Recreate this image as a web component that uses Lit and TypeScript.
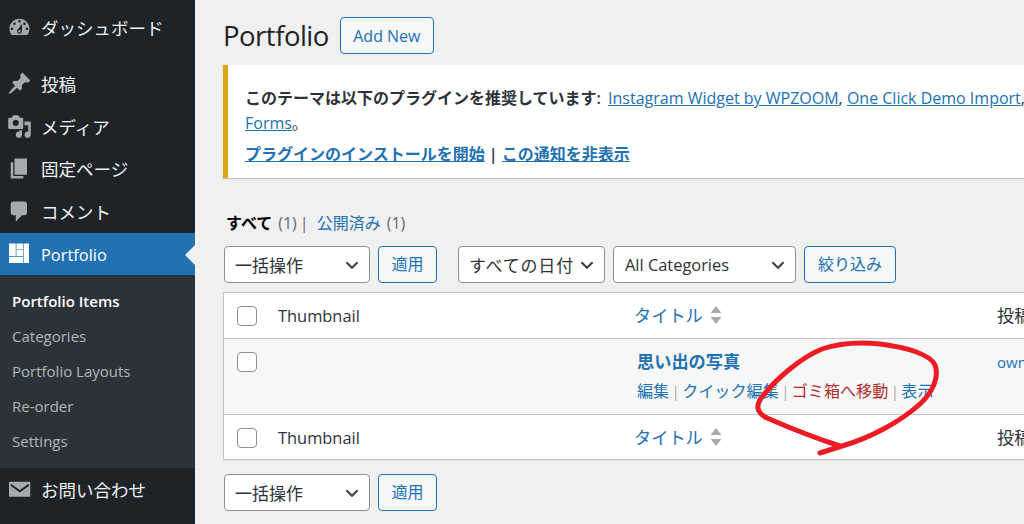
import { LitElement, html, css, svg, unsafeCSS } from "lit";
import { customElement } from "lit/decorators.js";

const FONT = unsafeCSS(`"Open Sans", "Noto Sans CJK JP", sans-serif`);

const ICONS: Record<string, string> = {
  dash: "M3.76 16h12.48c1.1-1.37 1.76-3.11 1.76-5 0-4.42-3.58-8-8-8s-8 3.58-8 8c0 1.89.66 3.63 1.76 5zM10 4c.55 0 1 .45 1 1s-.45 1-1 1-1-.45-1-1 .45-1 1-1zM6 6c.55 0 1 .45 1 1s-.45 1-1 1-1-.45-1-1 .45-1 1-1zm8 0c.55 0 1 .45 1 1s-.45 1-1 1-1-.45-1-1 .45-1 1-1zm-5.37 5.55L12 7v6c0 1.1-.9 2-2 2s-2-.9-2-2c0-.57.24-1.08.63-1.45zM4 10c.55 0 1 .45 1 1s-.45 1-1 1-1-.45-1-1 .45-1 1-1zm12 0c.55 0 1 .45 1 1s-.45 1-1 1-1-.45-1-1 .45-1 1-1zm-5 3c0-.55-.45-1-1-1s-1 .45-1 1 .45 1 1 1 1-.45 1-1z",
  pin: "M10.44 3.02l1.82-1.82 6.36 6.35-1.83 1.82c-1.05-.68-2.48-.57-3.41.36l-.75.75c-.92.93-1.04 2.35-.35 3.41l-1.83 1.82-2.41-2.41-2.8 2.79c-.42.42-3.38 2.71-3.8 2.29s1.86-3.39 2.28-3.81l2.79-2.79L4.1 9.36l1.83-1.82c1.05.69 2.48.57 3.4-.36l.75-.75c.93-.92 1.05-2.35.36-3.41z",
  media: "M13 11V4c0-.55-.45-1-1-1h-1.67L9 1H5L3.67 3H2c-.55 0-1 .45-1 1v7c0 .55.45 1 1 1h10c.55 0 1-.45 1-1zM7 4.5c1.38 0 2.5 1.12 2.5 2.5S8.38 9.5 7 9.5 4.5 8.38 4.5 7 5.62 4.5 7 4.5zM14 6h5v10.5c0 1.38-1.12 2.5-2.5 2.5S14 17.88 14 16.5s1.12-2.5 2.5-2.5c.17 0 .34.02.5.05V9h-3V6zm-4 8.05V13h2v3.5c0 1.38-1.12 2.5-2.5 2.5S7 17.88 7 16.5 8.12 14 9.5 14c.17 0 .34.02.5.05z",
  page: "M6 15V2h10v13H6zm-1 1h8v2H3V5h2v11z",
  comment: "M5 2h9c1.1 0 2 .9 2 2v7c0 1.1-.9 2-2 2h-2l-5 5v-5H5c-1.1 0-2-.9-2-2V4c0-1.1.9-2 2-2z",
  portfolio: "M1.6 2H7v10H1.6zM7.5 2h5.3v4.5H7.5zM7.5 7h5.3v5H7.5zM13.3 2h4.3v15.6h-4.3zM1.6 12.5h11.2v5.1H1.6z",
  mail: "M1.6 3.8h17v12h-17zM3.4 5.6l6.9 4.8 6.7-4.8.8 1.4-7.5 5.4L2.8 7z",
};

@customElement("app-root")
export class AppRoot extends LitElement {
  static styles = css`
    :host { display: block; width: 1024px; height: 524px; overflow: hidden; position: relative; background: #f0f0f1; font-family: ${FONT}; }
    .page { display: flex; width: 1024px; height: 524px; }
    .side { width: 195px; flex: none; background: #1d2327; color: #f0f0f1; font-size: 17.5px; }
    .item { display: flex; align-items: center; height: 42.5px; padding-left: 7px; gap: 9px; white-space: nowrap; }
    .item svg { width: 25px; height: 25px; fill: #a7aaad; flex: none; }
    .item.first { margin: 6px 0 14px; }
    .item.cur { background: #2271b1; color: #fff; position: relative; }
    .item.cur svg { fill: #fff; }
    .item.cur::after { content: ""; position: absolute; right: 0; top: 12px; border: 10px solid transparent; border-right-color: #f0f0f1; border-left: 0; }
    .latin { font-size: 16.4px; padding-top: 2px; }
    .sub { background: #2c3338; padding: 9px 0; font-size: 15px; color: #b3b6b9; }
    .sub div { height: 35px; line-height: 35px; padding-left: 12px; }
    .sub .on { color: #fff; font-weight: 600; }
    .main { flex: 1; min-width: 0; padding: 17px 0 0 28px; color: #3c434a; font-size: 16.4px; overflow: hidden; }
    .head { display: flex; align-items: center; gap: 11px; }
    h1 { margin: 0; font-size: 27.5px; letter-spacing: -0.5px; font-weight: 400; color: #1d2327; line-height: 37px; }
    .btn { box-sizing: border-box; height: 37px; display: inline-flex; align-items: center; justify-content: center; border: 1px solid #2271b1; border-radius: 4px; background: #f6f7f7; color: #2271b1; font-size: 16px; flex: none; }
    .btn.cjk { padding-bottom: 3px; }
    .add { width: 94px; }
    .notice { margin-top: 11px; height: 113px; box-sizing: border-box; width: 1000px; background: #fff; border-left: 5px solid #dba617; box-shadow: 0 1px 1px rgba(0,0,0,.2); padding: 21px 0 0 17px; font-size: 16px; line-height: 25px; white-space: nowrap; color: #2c3338; }
    .notice a { color: #2271b1; text-decoration: underline; }
    .notice a.lead { margin-left: 3px; }
    .notice p { margin: 0; }
    .notice .strong { font-weight: 600; }
    .notice .acts { margin-top: 6px; }
    .tabs { margin: 33px 0 0 3px; height: 24px; line-height: 24px; font-size: 16px; color: #646970; display: flex; gap: 6px; }
    .tabs b { color: #000; font-weight: 700; }
    .tabs a { color: #2271b1; }
    .tabs .sep { margin: 0 2px 0 -3px; }
    .tools { display: flex; margin: 11px 0 0 1px; }
    .tools.low { margin-top: 14px; }
    .sel { box-sizing: border-box; height: 37px; display: flex; align-items: center; justify-content: space-between; background: #fff; border: 1px solid #8c8f94; border-radius: 4px; padding: 0 10px; font-size: 17px; color: #2c3338; flex: none; white-space: nowrap; }
    .sel.en { font-size: 16.4px; padding-left: 11px; }
    .sel.wide span { letter-spacing: 0.8px; }
    .sel svg { width: 14px; height: 10px; fill: none; stroke: #3c434a; stroke-width: 2.2; }
    .table { box-sizing: border-box; margin-top: 9px; width: 1000px; background: #fff; border: 1px solid #c3c4c7; box-shadow: 0 1px 1px rgba(0,0,0,.04); }
    .row { display: grid; grid-template-columns: 13px 20px 21px 357px 362px 1fr; }
    .hrow { height: 45px; align-items: center; font-size: 16.4px; color: #2c3338; }
    .hrow .cb, .rrow .cb { grid-column: 2; }
    .hrow.top { border-bottom: 1px solid #c3c4c7; }
    .hrow.bot { border-top: 1px solid #c3c4c7; height: 43px; padding-top: 1px; }
    .cb { box-sizing: border-box; width: 20px; height: 20px; background: #fff; border: 1px solid #8c8f94; border-radius: 4px; }
    .title-h { color: #2271b1; display: flex; align-items: center; gap: 7px; font-size: 17.2px; padding-bottom: 2px; margin-left: -1px; }
    .title-h svg { width: 12px; height: 20px; fill: #a7aaad; }
    .author { font-size: 17.2px; padding-bottom: 2px; white-space: nowrap; }
    .rrow { height: 75px; background: #f6f7f7; color: #2271b1; }
    .rrow .cb { margin-top: 13px; }
    .rrow .col { grid-column: 5; padding: 11px 0 0 2px; white-space: nowrap; }
    .rrow .own { grid-column: 6; padding-top: 11px; font-size: 15px; line-height: 24px; }
    .rtitle { font-weight: 700; font-size: 17.2px; line-height: 24px; }
    .ra { margin-top: 4px; font-size: 16.1px; line-height: 26px; display: flex; }
    .ra i { font-style: normal; color: #a7aaad; width: 13px; text-align: center; font-size: 15px; }
    .ra .del { color: #b32d2e; }
    .ink { position: absolute; left: 0; top: 0; width: 1024px; height: 524px; pointer-events: none; fill: none; stroke: #ed1c24; stroke-width: 5; stroke-linecap: round; stroke-linejoin: round; }
  `;

  private icon(name: string) {
    return html`<svg viewBox="0 0 20 20" aria-hidden="true"><path fill-rule="evenodd" d=${ICONS[name]}></path></svg>`;
  }

  private select(label: string, w: number, ml = 0, cls = "") {
    return html`<div class="sel ${cls}" style="width:${w}px;margin-left:${ml}px"><span>${label}</span><svg viewBox="0 0 15 10"><path d="M1.5 2l6 6 6-6"></path></svg></div>`;
  }

  private btn(label: string, w: number, ml = 8) {
    return html`<div class="btn cjk" style="width:${w}px;margin-left:${ml}px">${label}</div>`;
  }

  private headRow(cls: string) {
    return html`<div class="row hrow ${cls}">
      <div class="cb"></div>
      <div></div>
      <div>Thumbnail</div>
      <div class="title-h">タイトル<svg viewBox="0 0 12 20"><path d="M6 1l5.5 7H.5zM6 19L.5 12h11z"></path></svg></div>
      <div class="author">投稿者</div>
    </div>`;
  }

  render() {
    return html`
      <div class="page">
        <nav class="side">
          <div class="item first">${this.icon("dash")}ダッシュボード</div>
          <div class="item">${this.icon("pin")}投稿</div>
          <div class="item">${this.icon("media")}メディア</div>
          <div class="item">${this.icon("page")}固定ページ</div>
          <div class="item">${this.icon("comment")}コメント</div>
          <div class="item cur">${this.icon("portfolio")}<span class="latin">Portfolio</span></div>
          <div class="sub">
            <div class="on">Portfolio Items</div>
            <div>Categories</div>
            <div>Portfolio Layouts</div>
            <div>Re-order</div>
            <div>Settings</div>
          </div>
          <div class="item">${this.icon("mail")}お問い合わせ</div>
        </nav>
        <main class="main">
          <div class="head"><h1>Portfolio</h1><div class="btn add">Add New</div></div>
          <div class="notice">
            <p><span class="strong">このテーマは以下のプラグインを推奨しています:</span> <a class="lead">Instagram Widget by WPZOOM</a>, <a>One Click Demo Import</a>,</p>
            <p><a>Forms</a>。</p>
            <p class="acts strong"><a>プラグインのインストールを開始</a> | <a>この通知を非表示</a></p>
          </div>
          <div class="tabs"><b>すべて</b><span>(1)</span><span class="sep">|</span><a>公開済み</a><span>(1)</span></div>
          <div class="tools">
            ${this.select("一括操作", 146)}${this.btn("適用", 59)}
            ${this.select("すべての日付", 147, 21, "wide")}${this.select("All Categories", 183, 8, "en")}${this.btn("絞り込み", 92)}
          </div>
          <div class="table">
            ${this.headRow("top")}
            <div class="row rrow">
              <div class="cb"></div>
              <div class="col">
                <div class="rtitle">思い出の写真</div>
                <div class="ra"><span>編集</span><i>|</i><span>クイック編集</span><i>|</i><span class="del">ゴミ箱へ移動</span><i>|</i><span>表示</span></div>
              </div>
              <div class="own">owner</div>
            </div>
            ${this.headRow("bot")}
          </div>
          <div class="tools low">${this.select("一括操作", 146)}${this.btn("適用", 59)}</div>
        </main>
      </div>
      <svg class="ink" viewBox="0 0 1024 524" aria-hidden="true">
        ${svg`<path d="M820 453 L842 446 C870 438 900 422 920 404 C934 391 939 376 935 365 C930 354 905 347 880 344 C860 342 840 343 822 349 C800 358 775 380 762 397 C755 406 757 413 767 418 C790 428 815 438 840 446"></path>`}
      </svg>
    `;
  }
}
